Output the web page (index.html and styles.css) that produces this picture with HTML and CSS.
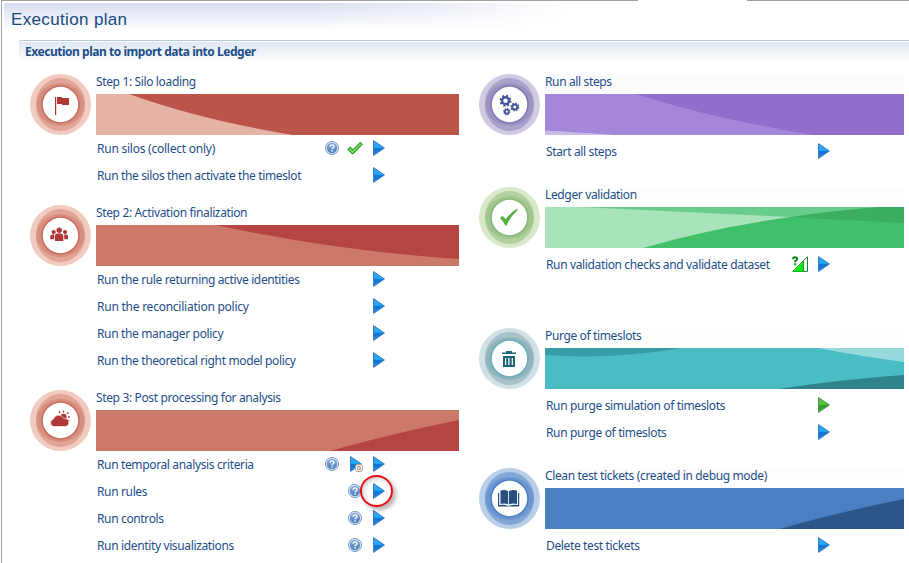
FILE: index.html
```html
<!DOCTYPE html>
<html lang="en">
<head>
<meta charset="utf-8">
<title>Execution plan</title>
<link rel="stylesheet" href="styles.css">
</head>
<body>
<svg class="defs" width="0" height="0" aria-hidden="true">
  <defs>
    <linearGradient id="blueFill" x1="0" y1="0" x2="0" y2="1"><stop offset="0" stop-color="#3aa6ef"/><stop offset=".45" stop-color="#1fa9f8"/><stop offset=".55" stop-color="#0f70cf"/><stop offset="1" stop-color="#2c8ee6"/></linearGradient>
    <linearGradient id="greenFill" x1="0" y1="0" x2="0" y2="1"><stop offset="0" stop-color="#5fb950"/><stop offset=".45" stop-color="#55c544"/><stop offset=".55" stop-color="#319528"/><stop offset="1" stop-color="#55b548"/></linearGradient>
    <linearGradient id="helpFill" x1="0" y1="0" x2="0" y2="1"><stop offset="0" stop-color="#86a9d4"/><stop offset="1" stop-color="#4f80bd"/></linearGradient>
    <symbol id="play" viewBox="0 0 16 16"><path d="M3.5 .6V15.4L14.4 8Z" fill="url(#blueFill)" stroke="#3a7cc4" stroke-width="1"/></symbol>
    <symbol id="play-green" viewBox="0 0 16 16"><path d="M3.5 .6V15.4L14.4 8Z" fill="url(#greenFill)" stroke="#4b9a44" stroke-width="1"/></symbol>
    <symbol id="play-clock" viewBox="0 0 16 16"><path d="M3.5 .6V15.4L14.4 8Z" fill="url(#blueFill)" stroke="#3a7cc4"/><rect x="8.5" y="8.5" width="7" height="7" rx="2" fill="#f5f3ec" stroke="#aaa18a"/><path d="M13.6 10.5H10.7V13.5H13.5V12H12" fill="none" stroke="#9b927d" stroke-width=".9"/></symbol>
    <symbol id="help" viewBox="0 0 16 16"><circle cx="8" cy="8" r="6.6" fill="#dfe9f5" stroke="#7096c6" stroke-width=".9"/><circle cx="8" cy="8" r="5.2" fill="url(#helpFill)"/><path d="M6.1 6.7C6.1 4.3 10 4.3 10 6.5C10 7.8 8.1 7.8 8.1 9.3M8.1 10.3V11.8" fill="none" stroke="#fff" stroke-width="1.4"/></symbol>
    <symbol id="tick" viewBox="0 0 16 16"><path d="M.7 9.3L3.2 7L6 9.7L13.2 2.2L15.3 4.3L6.4 13.7H5Z" fill="#48cf35" stroke="#267c28" stroke-width=".9"/><path d="M2.3 9.2L5.8 12L13.6 4" fill="none" stroke="#8cee70" stroke-width=".9"/></symbol>
    <symbol id="signal" viewBox="0 0 16 16"><path d="M.8 15.4L15.5 .7V15.4Z" fill="#fff" stroke="#177f25"/><path d="M1.4 15.2L11 5.6V15.2Z" fill="#00f20c"/><path d="M11.4 5V15.4" stroke="#177f25"/><path d="M1 3.2Q1 1.3 3 1.3Q5.2 1.3 5.2 3Q5.2 4.3 3.2 5V6.2M3.2 7.3V9.3" fill="none" stroke="#118a13" stroke-width="2"/></symbol>
    <symbol id="rings" viewBox="0 0 61 61"><circle class="ring-a" cx="30.5" cy="30.5" r="30.5"/><ellipse class="ring-b" cx="30.5" cy="30.5" rx="24.7" ry="26.5"/><ellipse class="ring-c" cx="30.5" cy="30.5" rx="24" ry="21.5"/><circle class="ring-d" cx="30.5" cy="30.5" r="19.3"/><circle cx="30.5" cy="30.5" r="17.7" fill="#fff"/></symbol>
  </defs>
</svg>
<main class="window">
  <header class="page-head"><h1>Execution plan</h1></header>
  <div class="panel">
    <h2>Execution plan to import data into Ledger</h2>
    <div class="columns">
      <div class="column left">
        <section class="group red">
          <svg class="badge" viewBox="0 0 61 61"><use href="#rings"/><path class="glyph" d="M25 23H26.2V41H25ZM27 23H32V24H39V31H32V30H27Z"/></svg>
          <h3>Step 1: Silo loading</h3>
          <svg class="banner" viewBox="0 0 363 41" preserveAspectRatio="none"><path fill="#bb554a" d="M0 0H363V41H0Z"/><path fill="#e5b3a5" d="M0 0H33Q105 26 197 41H0Z"/></svg>
          <ul>
            <li class="loose"><span>Run silos (collect only)</span><svg><use href="#help"/></svg><svg><use href="#tick"/></svg><svg><use href="#play"/></svg></li>
            <li><span>Run the silos then activate the timeslot</span><svg><use href="#play"/></svg></li>
          </ul>
        </section>
        <section class="group red">
          <svg class="badge" viewBox="0 0 61 61"><use href="#rings"/><g class="glyph"><circle cx="29.2" cy="25.2" r="2.7"/><circle cx="23.7" cy="27.1" r="2.1"/><circle cx="35" cy="27.1" r="2.1"/><path d="M25 36V31Q25 28.5 27.5 28.5H31Q33.3 28.5 33.3 31V36ZM20.2 34.3V31.5Q20.2 29.4 22.3 29.4H24.2V34.3ZM34.2 34.3V29.4H36Q38 29.4 38 31.5V34.3Z"/></g></svg>
          <h3>Step 2: Activation finalization</h3>
          <svg class="banner" viewBox="0 0 363 41" preserveAspectRatio="none"><path fill="#cc7969" d="M0 0H363V41H0Z"/><path fill="#b54542" d="M120 0Q240 26 363 34V0Z"/></svg>
          <ul>
            <li><span>Run the rule returning active identities</span><svg><use href="#play"/></svg></li>
            <li class="loose"><span>Run the reconciliation policy</span><svg><use href="#play"/></svg></li>
            <li><span>Run the manager policy</span><svg><use href="#play"/></svg></li>
            <li><span>Run the theoretical right model policy</span><svg><use href="#play"/></svg></li>
          </ul>
        </section>
        <section class="group red">
          <svg class="badge" viewBox="0 0 61 61"><use href="#rings"/><g class="glyph"><circle cx="33.5" cy="27" r="3.2"/><path d="M29 21.5L30 23M33.5 20.5V22.5M38.5 22.5L37 23.8M39.8 27H38M39.3 31L37.8 30" stroke="#b03937" stroke-width="1.4"/><path d="M23.5 36.5A3.7 3.7 0 0 1 23.3 29.3A5.5 5.5 0 0 1 33.7 28.5A4.1 4.1 0 1 1 34.3 36.5Z" stroke="#fff" stroke-width=".6"/></g></svg>
          <h3>Step 3: Post processing for analysis</h3>
          <svg class="banner" viewBox="0 0 363 41" preserveAspectRatio="none"><path fill="#cc7969" d="M0 0H363V41H0Z"/><path fill="#b54542" d="M234 41Q290 25 363 10V41Z"/></svg>
          <ul>
            <li><span>Run temporal analysis criteria</span><svg><use href="#help"/></svg><svg><use href="#play-clock"/></svg><svg><use href="#play"/></svg></li>
            <li class="marked"><span>Run rules</span><svg><use href="#help"/></svg><svg><use href="#play"/></svg><i class="marker"></i></li>
            <li><span>Run controls</span><svg><use href="#help"/></svg><svg><use href="#play"/></svg></li>
            <li><span>Run identity visualizations</span><svg><use href="#help"/></svg><svg><use href="#play"/></svg></li>
          </ul>
        </section>
      </div>
      <div class="column right">
        <section class="group purple">
          <svg class="badge" viewBox="0 0 61 61"><use href="#rings"/><g class="gears"><circle class="g1" cx="26.5" cy="26.8" r="3.5"/><circle class="g2" cx="35.8" cy="33" r="2.6"/><circle class="g3" cx="27.8" cy="37.7" r="2"/><circle class="t1" cx="26.5" cy="26.8" r="5"/><circle class="t2" cx="35.8" cy="33" r="3.7"/><circle class="t3" cx="27.8" cy="37.7" r="3"/></g></svg>
          <h3>Run all steps</h3>
          <svg class="banner" viewBox="0 0 359 41" preserveAspectRatio="none"><path fill="#916dcc" d="M0 0H359V41H0Z"/><path fill="#a487d8" d="M0 0H91Q165 24 268 41H0Z"/><path fill="#c9b8ea" d="M0 36.5Q30 38 70 41H0Z"/></svg>
          <ul><li><span>Start all steps</span><svg><use href="#play"/></svg></li></ul>
        </section>
        <section class="group green">
          <svg class="badge" viewBox="0 0 61 61"><use href="#rings"/><path class="glyph" d="M21 31.2L23.2 28.8L27 32.3Q30.5 26 38.5 21.5V23.3Q31.5 29.5 27.6 38.5H26.3Q24.5 34 21 31.2Z"/></svg>
          <h3>Ledger validation</h3>
          <svg class="banner" viewBox="0 0 359 41" preserveAspectRatio="none"><path fill="#a8e3ba" d="M0 0H359V41H0Z"/><path fill="#68cd8c" d="M35 0L246 10L359 16V0Z"/><path fill="#40c06b" d="M98 41Q200 11 335 0H359V41Z"/><path fill="#3cae60" d="M246 10.2Q285 4 335 0H359V16Z"/></svg>
          <ul><li><span>Run validation checks and validate dataset</span><svg><use href="#signal"/></svg><svg><use href="#play"/></svg></li></ul>
        </section>
        <section class="group teal">
          <svg class="badge" viewBox="0 0 61 61"><use href="#rings"/><path class="glyph" fill-rule="evenodd" d="M23 26V24.5H27V23H33V24.5H37V26H23ZM24 28H36V39H24ZM26 30V37H27.2V30ZM29.2 30V37H30.5V30ZM32.7 30V37H33.9V30Z"/></svg>
          <h3>Purge of timeslots</h3>
          <svg class="banner" viewBox="0 0 359 41" preserveAspectRatio="none"><path fill="#4abcc3" d="M0 0H359V41H0Z"/><path fill="#379ca5" d="M0 0H137Q65 12 0 7Z"/><path fill="#97dade" d="M273 0Q320 9 359 14V0Z"/><path fill="#2f848b" d="M233 41Q300 31 359 27V41Z"/></svg>
          <ul>
            <li><span>Run purge simulation of timeslots</span><svg><use href="#play-green"/></svg></li>
            <li><span>Run purge of timeslots</span><svg><use href="#play"/></svg></li>
          </ul>
        </section>
        <section class="group blue">
          <svg class="badge" viewBox="0 0 61 61"><use href="#rings"/><path class="glyph" d="M21.5 22.5Q26 21 29.2 23.3V36.5Q26 34.7 21.5 36ZM30 23.3Q33.5 21 38 22.5V36Q33.5 34.7 30 36.5ZM19 25H20.2V37Q25 36 29.5 38Q34.5 36 39 37V25H40.2V38.5H19Z"/></svg>
          <h3>Clean test tickets (created in debug mode)</h3>
          <svg class="banner" viewBox="0 0 359 41" preserveAspectRatio="none"><path fill="#4a7fc1" d="M0 0H359V41H0Z"/><path fill="#2d558a" d="M235 41Q290 25 359 11V41Z"/></svg>
          <ul><li><span>Delete test tickets</span><svg><use href="#play"/></svg></li></ul>
        </section>
      </div>
    </div>
  </div>
</main>
</body>
</html>
```
FILE: styles.css
```css
* { box-sizing: border-box; }
body { margin: 0; background: #fff; color: #1d4e8a; font: 12px/20px "Noto Sans", sans-serif; overflow: hidden; }
h1, h2, h3, ul { margin: 0; padding: 0; font: inherit; list-style: none; }
.defs { display: block; height: 0; }
.window {
  height: 563px;
  margin-left: 1px;
  padding: 3px 0 0 2px;
  border-left: 1px solid #a0a0a0;
  background: linear-gradient(90deg, #a0a0a0 636px, #fff 636px, #fff 745px, #a0a0a0 745px) 0 0 / 100% 1px no-repeat;
}
.page-head {
  height: 37px;
  padding: 5px 0 0 7px;
  background: linear-gradient(180deg, rgba(255,255,255,0), #fff 27px), linear-gradient(90deg, #d7dcef 0, #d7dcef 300px, #fff 570px);
}
h1 { font: 17px/23px "Liberation Sans", sans-serif; letter-spacing: .35px; color: #174a80; }
.panel { margin-left: 15px; }
h2 {
  height: 22px;
  padding-left: 6px;
  border-top: 1px solid #b3c5d8;
  border-radius: 3px 0 0 0;
  background: linear-gradient(#fff 1px, #dfe7f1 1px, #fff);
  font-weight: 700;
  line-height: 21px;
  letter-spacing: -.47px;
}
.columns { display: flex; gap: 20px; padding: 12px 5px 0 11px; }
.column { display: flex; flex-direction: column; }
.left { width: 429px; gap: 17px; }
.right { width: 425px; gap: 23px; }
.group { display: grid; grid-template: 20px 41px auto / 61px 1fr; column-gap: 5px; }
.badge { grid-row: 1 / 3; width: 61px; height: 61px; }
h3 { line-height: 15px; letter-spacing: -.36px; white-space: nowrap; }
.banner { width: 100%; height: 41px; }
ul { grid-column: 2; display: grid; gap: 1px; padding-left: 1px; }
li { position: relative; display: flex; align-items: center; gap: 7px; height: 26px; padding-right: 73px; letter-spacing: -.36px; white-space: nowrap; }
li.loose { letter-spacing: -.24px; }
li span { flex: 1; padding-top: 1px; }
li svg { width: 16px; height: 16px; flex: none; }
.right ul { padding-top: 3px; }
.marked { z-index: 1; }
.marker { position: absolute; right: 66px; top: -3px; width: 33px; height: 32px; border: 2px solid #ea0a12; border-radius: 50%; box-shadow: 3px 3px 4px rgba(0,0,0,.3), inset 2px 2px 4px rgba(0,0,0,.18); }
.ring-a { fill: var(--a); }
.ring-b { fill: var(--b); }
.ring-c { fill: var(--c); }
.ring-d { fill: var(--d); }
.glyph { fill: var(--glyph); }
.red { --a: #f1cbbf; --b: #e0a596; --c: #d78f7f; --d: #c96e5e; --glyph: #b03937; }
.purple { --a: #d2cae2; --b: #aaa3cb; --c: #9b93c1; --d: #837bb2; --glyph: #44559b; }
.green { --a: #d9e8c8; --b: #b3d1a0; --c: #a0c68e; --d: #87b879; --glyph: #5aae46; }
.teal { --a: #d0e0e4; --b: #a7c3c9; --c: #91b3bb; --d: #68aebb; --glyph: #1b6577; }
.blue { --a: #b9cee9; --b: #82a6d7; --c: #6d96d0; --d: #4d80c4; --glyph: #27507f; }
.purple h3 { background: #fbfafd; }
.green h3, .teal h3 { background: #fcfefd; }
.blue h3 { background: #fdfdfd; }
.teal { margin-top: 28px; }
.gears { fill: none; stroke: #44559b; }
.g1 { stroke-width: 2.4; }
.g2 { stroke-width: 2; }
.g3 { stroke-width: 1.8; }
.t1 { stroke-width: 2; stroke-dasharray: 2 1.93; }
.t2 { stroke-width: 1.5; stroke-dasharray: 1.5 1.406; }
.t3 { stroke-width: 1.3; stroke-dasharray: 1.2 1.156; }
```
